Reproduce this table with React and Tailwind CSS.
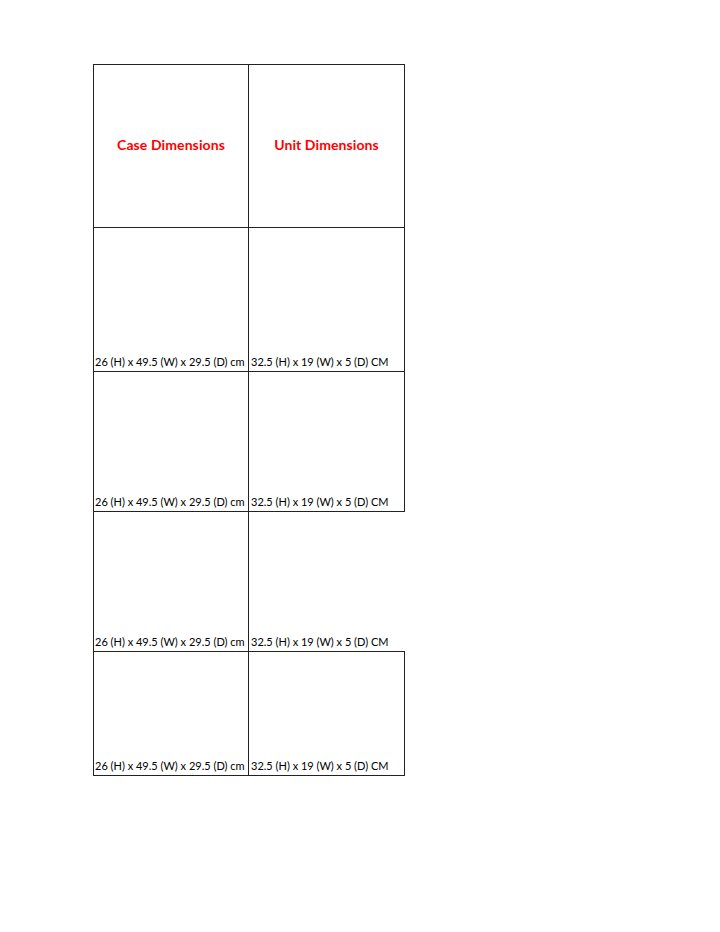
import React from 'react'

const rows = [
  { h: 'h-[144px]', right: true },
  { h: 'h-[140px]', right: true },
  { h: 'h-[140px]', right: false },
  { h: 'h-[124px]', right: true },
]

function App() {
  return (
    <div className="min-h-[932px] w-[720px] bg-white pl-[93px] pt-[64px]" style={{ fontFamily: 'Lato, "Liberation Sans", sans-serif' }}>
      <table className="border-collapse table-fixed w-[311px]">
        <colgroup>
          <col className="w-[155px]" />
          <col className="w-[156px]" />
        </colgroup>
        <tbody>
          <tr className="h-[163px]">
            <td className="border border-[#222] text-center align-middle pb-[4px] font-bold text-[14px] tracking-[0.1px] text-[#ff0000]">
              Case Dimensions
            </td>
            <td className="border border-[#222] text-center align-middle pb-[4px] font-bold text-[14px] tracking-[0.1px] text-[#ff0000]">
              Unit Dimensions
            </td>
          </tr>
          {rows.map((r, i) => (
            <tr key={i} className={r.h}>
              <td className="border border-[#222] align-bottom px-[1px] pb-[2px] text-[11px] leading-[14px] text-black whitespace-nowrap">
                26 (H) x 49.5 (W) x 29.5 (D) cm
              </td>
              <td
                className={
                  r.right
                    ? 'border border-[#222] align-bottom px-[2px] pb-[2px] text-[11px] leading-[14px] text-black whitespace-nowrap'
                    : 'border-l border-t border-b border-r border-l-[#222] border-t-[#222] border-b-[#222] border-r-transparent align-bottom px-[2px] pb-[2px] text-[11px] leading-[14px] text-black whitespace-nowrap'
                }
              >
                32.5 (H) x 19 (W) x 5 (D) CM
              </td>
            </tr>
          ))}
        </tbody>
      </table>
    </div>
  )
}

export default App
